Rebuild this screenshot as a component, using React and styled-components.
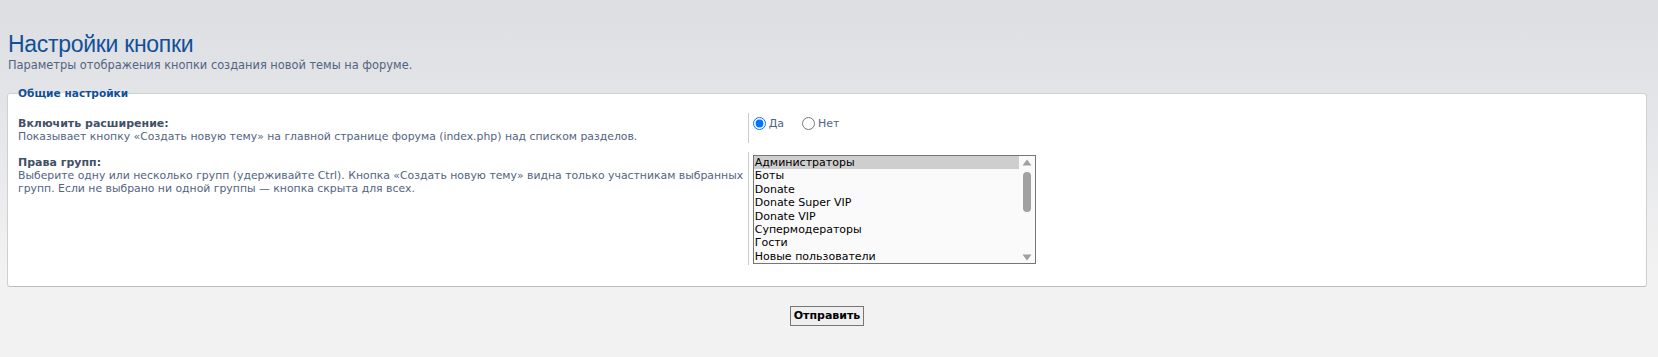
import React from "react";
import styled, { createGlobalStyle } from "styled-components";

const GlobalStyle = createGlobalStyle`
  html, body {
    margin: 0;
    padding: 0;
  }
  body {
    min-height: 357px;
    background: linear-gradient(to bottom, #dcdee2 0px, #e6e7ea 140px, #f2f2f2 270px) no-repeat #f2f2f2;
    font-family: "DejaVu Sans", Verdana, sans-serif;
    color: #536482;
  }
`;

const groups = [
  "Администраторы",
  "Боты",
  "Donate",
  "Donate Super VIP",
  "Donate VIP",
  "Супермодераторы",
  "Гости",
  "Новые пользователи",
];

const Page = styled.div`
  padding: 31px 11px 20px 7px;
`;

const Title = styled.h1`
  margin: 0;
  padding-left: 1px;
  font-family: "Liberation Sans", Arial, sans-serif;
  font-weight: normal;
  font-size: 23px;
  line-height: 26px;
  letter-spacing: -0.3px;
  color: #115098;
`;

const Subtitle = styled.p`
  margin: 1px 0 0;
  padding-left: 1px;
  font-size: 11.4px;
  line-height: 14px;
  color: #536482;
`;

const Fieldset = styled.fieldset`
  margin: 15px 0 0;
  padding: 13px 10px 21px;
  background: #fff;
  border: 1px solid #cfcfcf;
  border-bottom-color: #bdbdbd;
  border-radius: 3px;
  min-width: 0;
`;

const Legend = styled.legend`
  padding: 0;
  font-size: 10.6px;
  font-weight: bold;
  line-height: 13px;
  color: #115098;
`;

const Row = styled.dl`
  display: grid;
  grid-template-columns: 45.1% 1fr;
  margin: 0 0 ${(p) => (p.last ? 0 : 9)}px;
`;

const Term = styled.dt`
  padding-top: 4px;
  font-size: 11px;
  line-height: 13px;
`;

const Label = styled.label`
  display: block;
  font-weight: bold;
  color: #425067;
`;

const Explain = styled.span`
  display: block;
  font-size: 10.85px;
  color: #536482;
`;

const Detail = styled.dd`
  margin: 0;
  padding: ${(p) => (p.tight ? "3px 0 1px 4px" : "4px 0 0 4px")};
  border-left: 1px solid #cccccc;
`;

const Radios = styled.div`
  display: flex;
  align-items: center;
  gap: 18px;
`;

const RadioLabel = styled.label`
  display: inline-flex;
  align-items: center;
  gap: 3px;
  font-size: 11px;
  line-height: 13px;
  color: #536482;

  input {
    margin: 0;
    width: 13px;
    height: 13px;
  }
`;

const ListBox = styled.div`
  display: flex;
  width: 283px;
  height: 109px;
  box-sizing: border-box;
  border: 1px solid #767676;
  background: #fafafa;
  overflow: hidden;
`;

const Options = styled.div`
  flex: 1;
`;

const Option = styled.div`
  padding-left: 1px;
  font-size: 11px;
  line-height: 13.4px;
  height: 13.4px;
  white-space: nowrap;
  color: #000;
  background: ${(p) => (p.selected ? "#cecece" : "transparent")};
`;

const Scrollbar = styled.div`
  width: 16px;
  display: flex;
  flex-direction: column;
  align-items: center;
  padding: 3px 0 2px;
  box-sizing: border-box;
`;

const Thumb = styled.div`
  width: 8px;
  height: 40px;
  margin-top: 6px;
  border-radius: 4px;
  background: #a0a0a0;
`;

const Spacer = styled.div`
  flex: 1;
`;

const Submit = styled.div`
  display: flex;
  justify-content: center;
  padding-top: 19px;
`;

const Button = styled.button`
  height: 20px;
  padding: 0 3px;
  font-family: "DejaVu Sans", Verdana, sans-serif;
  font-size: 11px;
  font-weight: bold;
  line-height: 18px;
  color: #000;
  background: #efefef;
  border: 1px solid #767676;
  border-radius: 0;
`;

const Arrow = ({ down }) => (
  <svg width="10" height="7" viewBox="0 0 10 7">
    <path
      d={down ? "M0.5 0.5 L9.5 0.5 L5 6.5 Z" : "M5 0.5 L9.5 6.5 L0.5 6.5 Z"}
      fill="#a0a0a0"
    />
  </svg>
);

export default function App() {
  return (
    <Page>
      <GlobalStyle />
      <Title>Настройки кнопки</Title>
      <Subtitle>Параметры отображения кнопки создания новой темы на форуме.</Subtitle>

      <Fieldset>
        <Legend>Общие настройки</Legend>

        <Row>
          <Term>
            <Label>Включить расширение:</Label>
            <Explain>
              Показывает кнопку «Создать новую тему» на главной странице форума
              (index.php) над списком разделов.
            </Explain>
          </Term>
          <Detail>
            <Radios>
              <RadioLabel>
                <input type="radio" name="enable" defaultChecked />
                Да
              </RadioLabel>
              <RadioLabel>
                <input type="radio" name="enable" />
                Нет
              </RadioLabel>
            </Radios>
          </Detail>
        </Row>

        <Row last>
          <Term>
            <Label>Права групп:</Label>
            <Explain>
              Выберите одну или несколько групп (удерживайте Ctrl). Кнопка
              «Создать новую тему» видна только участникам выбранных групп.
              Если не выбрано ни одной группы — кнопка скрыта для всех.
            </Explain>
          </Term>
          <Detail tight>
            <ListBox role="listbox" aria-multiselectable="true">
              <Options>
                {groups.map((g, i) => (
                  <Option key={g} selected={i === 0}>
                    {g}
                  </Option>
                ))}
              </Options>
              <Scrollbar>
                <Arrow />
                <Thumb />
                <Spacer />
                <Arrow down />
              </Scrollbar>
            </ListBox>
          </Detail>
        </Row>
      </Fieldset>

      <Submit>
        <Button type="button">Отправить</Button>
      </Submit>
    </Page>
  );
}
